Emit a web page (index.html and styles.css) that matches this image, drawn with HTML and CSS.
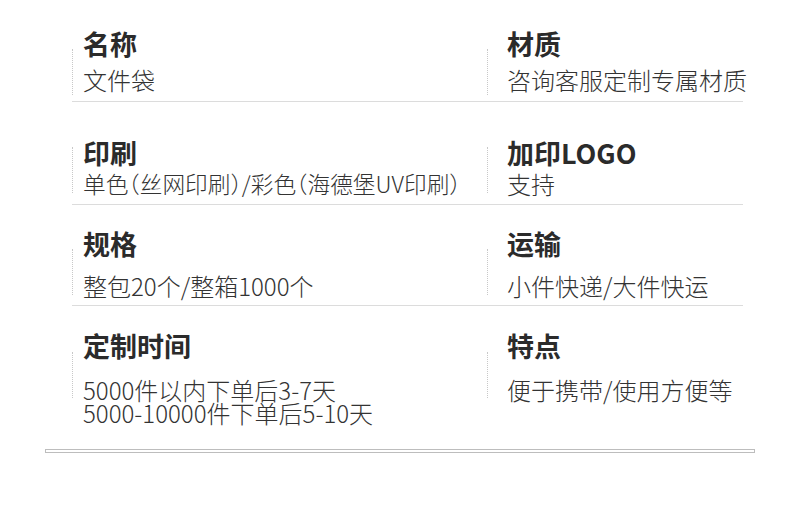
FILE: index.html
```html
<!DOCTYPE html>
<html lang="zh-CN">
<head>
<meta charset="utf-8">
<title>文件袋 参数</title>
<link rel="stylesheet" href="styles.css">
</head>
<body>
<div class="sheet">
  <div class="row row-1">
    <div class="cell cell-left">
      <div class="rule"></div>
      <div class="text">
        <div class="title">名称</div>
        <div class="sub">文件袋</div>
      </div>
    </div>
    <div class="cell cell-right">
      <div class="rule"></div>
      <div class="text">
        <div class="title">材质</div>
        <div class="sub">咨询客服定制专属材质</div>
      </div>
    </div>
  </div>

  <div class="row row-2">
    <div class="cell cell-left">
      <div class="rule"></div>
      <div class="text">
        <div class="title">印刷</div>
        <div class="sub sub-small">单色（丝网印刷）/彩色（海德堡UV印刷）</div>
      </div>
    </div>
    <div class="cell cell-right">
      <div class="rule"></div>
      <div class="text">
        <div class="title">加印LOGO</div>
        <div class="sub">支持</div>
      </div>
    </div>
  </div>

  <div class="row row-3">
    <div class="cell cell-left">
      <div class="rule"></div>
      <div class="text">
        <div class="title">规格</div>
        <div class="sub">整包20个/整箱1000个</div>
      </div>
    </div>
    <div class="cell cell-right">
      <div class="rule"></div>
      <div class="text">
        <div class="title">运输</div>
        <div class="sub">小件快递/大件快运</div>
      </div>
    </div>
  </div>

  <div class="row row-4">
    <div class="cell cell-left">
      <div class="rule"></div>
      <div class="text">
        <div class="title">定制时间</div>
        <div class="sub sub-multi">5000件以内下单后3-7天<br>5000-10000件下单后5-10天</div>
      </div>
    </div>
    <div class="cell cell-right">
      <div class="rule"></div>
      <div class="text">
        <div class="title">特点</div>
        <div class="sub">便于携带/使用方便等</div>
      </div>
    </div>
  </div>
</div>
<div class="bottom-bar"></div>
</body>
</html>
```

FILE: styles.css
```css
html, body {
  margin: 0;
  padding: 0;
  background: #ffffff;
}

body {
  font-family: "Noto Sans CJK SC", "Noto Sans", sans-serif;
  color: #333333;
}

.sheet {
  margin-left: 72px;
  width: 671px;
}

.row {
  display: flex;
  border-bottom: 1px solid #dcdcdc;
}

.row-4 {
  border-bottom: none;
}

.cell {
  display: flex;
  align-items: flex-start;
}

.cell-left {
  width: 415px;
  flex: none;
}

.cell-right {
  flex: 1;
}

.rule {
  flex: none;
  width: 0;
  height: 46px;
  border-left: 1px dotted #c8c8c8;
}

.cell-left .text {
  padding-left: 10px;
}

.cell-right .text {
  padding-left: 19px;
}

.title {
  font-size: 27px;
  line-height: 27px;
  font-weight: 700;
  color: #2b2b2b;
  white-space: nowrap;
}

.sub {
  font-size: 24px;
  line-height: 24px;
  font-weight: 300;
  color: #333333;
  white-space: nowrap;
  font-feature-settings: "halt";
}

.sub-small {
  font-size: 22.7px;
}

.sub-multi {
  line-height: 23px;
}

/* per-row vertical rhythm */
.row-1 .text { padding-top: 30px; padding-bottom: 9px; }
.row-1 .sub { margin-top: 11px; }
.row-1 .rule { margin-top: 49px; }

.row-2 .text { padding-top: 37px; padding-bottom: 8px; }
.row-2 .sub { margin-top: 6px; }
.row-2 .rule { margin-top: 45px; }

.row-3 .text { padding-top: 25px; padding-bottom: 7px; }
.row-3 .sub { margin-top: 17px; }
.row-3 .rule { margin-top: 44px; }

.row-4 .text { padding-top: 26px; padding-bottom: 0; }
.row-4 .sub { margin-top: 19px; }
.row-4 .rule { margin-top: 46px; }

.bottom-bar {
  margin-left: 45px;
  margin-top: 25px;
  width: 708px;
  height: 2px;
  border: 1px solid #bdbdbd;
}
```
